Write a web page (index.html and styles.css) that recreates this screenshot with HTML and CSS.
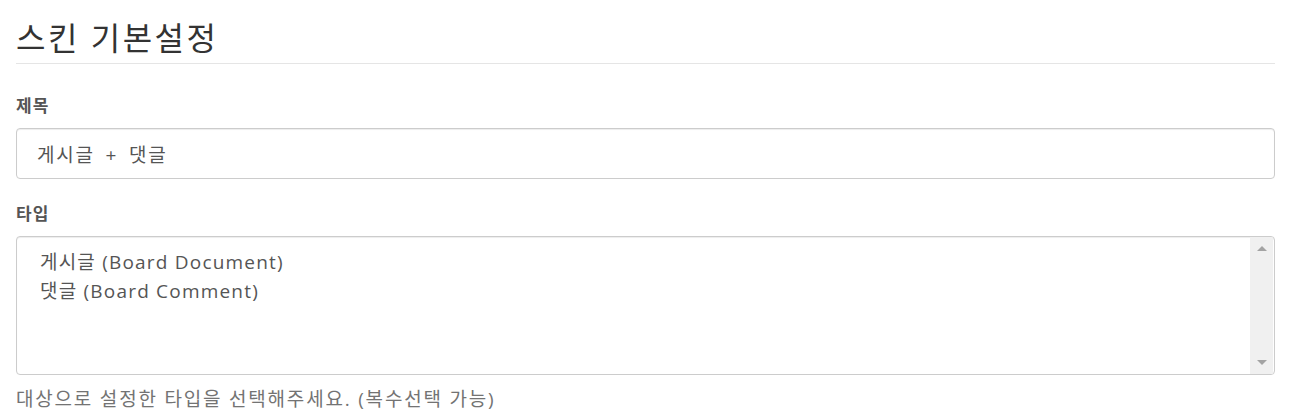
FILE: index.html
```html
<!DOCTYPE html>
<html lang="ko">
<head>
    <meta charset="UTF-8">
    <title>스킨 기본설정</title>
    <link rel="stylesheet" href="styles.css">
</head>
<body>
    <div class="container">
        <h3 class="page-header">스킨 기본설정</h3>
        <div class="form-group">
            <label class="control-label">제목</label>
            <input type="text" class="form-control" value="게시글 + 댓글">
        </div>
        <div class="form-group">
            <label class="control-label">타입</label>
            <div class="list-box" role="listbox">
                <div class="list-items">
                    <div class="list-item">게시글 (Board Document)</div>
                    <div class="list-item">댓글 (Board Comment)</div>
                </div>
                <div class="scrollbar">
                    <span class="arrow up"></span>
                    <span class="arrow down"></span>
                </div>
            </div>
            <p class="help-block">대상으로 설정한 타입을 선택해주세요. (복수선택 가능)</p>
        </div>
    </div>
</body>
</html>
```

FILE: styles.css
```css
/* styles.css */
body {
    margin: 0;
    font-family: "Open Sans", "Noto Sans CJK KR", sans-serif;
    color: #333;
    background: #fff;
}

.container {
    padding: 0 16px;
}

.page-header {
    margin: 0 0 30px;
    padding: 18px 0 6px;
    font-size: 32px;
    font-weight: 400;
    line-height: 39px;
    letter-spacing: 2.5px;
    color: #333;
    border-bottom: 1px solid #e5e5e5;
}

.form-group {
    margin-bottom: 23px;
}

.control-label {
    display: block;
    margin-bottom: 10px;
    font-size: 17px;
    font-weight: 700;
    line-height: 24px;
    letter-spacing: 1px;
    color: #555;
}

.form-control {
    display: block;
    box-sizing: border-box;
    width: 100%;
    height: 51px;
    margin: 0;
    padding: 0 20px;
    font-family: inherit;
    font-size: 19px;
    letter-spacing: 1.8px;
    word-spacing: 4px;
    color: #555;
    border: 1px solid #ccc;
    border-radius: 4px;
    outline: none;
    box-shadow: inset 0 1px 1px rgba(0, 0, 0, 0.075);
}

.list-box {
    display: flex;
    box-sizing: border-box;
    height: 139px;
    border: 1px solid #ccc;
    border-radius: 4px;
    overflow: hidden;
    box-shadow: inset 0 1px 1px rgba(0, 0, 0, 0.075);
}

.list-items {
    flex: 1;
    padding: 11px 23px;
}

.list-item {
    font-size: 19px;
    line-height: 29px;
    letter-spacing: 1.2px;
    color: #555;
}

.scrollbar {
    display: flex;
    flex-direction: column;
    justify-content: space-between;
    align-items: center;
    width: 23px;
    padding: 9px 0;
    margin-right: 1px;
    background: #f0f0f0;
}

.arrow {
    width: 0;
    height: 0;
    border-left: 5px solid transparent;
    border-right: 5px solid transparent;
}

.arrow.up {
    border-bottom: 5px solid #a3a3a3;
}

.arrow.down {
    border-top: 5px solid #a3a3a3;
}

.help-block {
    margin: 11px 0 0;
    font-size: 19px;
    line-height: 26px;
    letter-spacing: 1.8px;
    color: #737373;
}
```
